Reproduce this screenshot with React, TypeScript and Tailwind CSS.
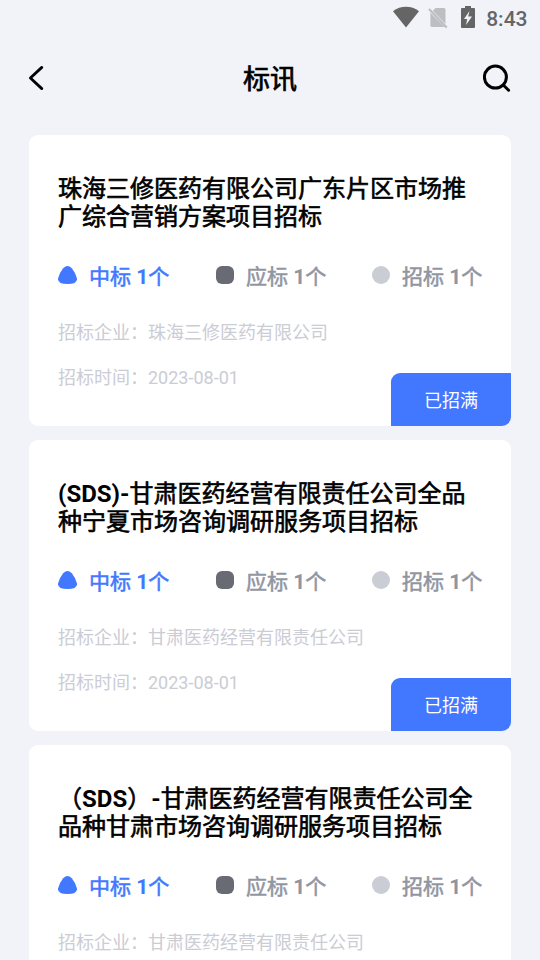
import { Fragment } from "react";

const font = "font-['Roboto','Noto_Sans_CJK_SC',sans-serif]";

type Bid = { title: string[]; company: string; date: string };

const bids: Bid[] = [
  { title: ["珠海三修医药有限公司广东片区市场推", "广综合营销方案项目招标"], company: "珠海三修医药有限公司", date: "2023-08-01" },
  { title: ["(SDS)-甘肃医药经营有限责任公司全品", "种宁夏市场咨询调研服务项目招标"], company: "甘肃医药经营有限责任公司", date: "2023-08-01" },
  { title: ["（SDS）-甘肃医药经营有限责任公司全", "品种甘肃市场咨询调研服务项目招标"], company: "甘肃医药经营有限责任公司", date: "2023-08-01" },
];

// Latin runs use the bold face; Chinese runs use the regular face thickened by a stroke.
function Strong({ text }: { text: string }) {
  return (
    <>
      {text.split(/([ -~]+)/).map((part, i) => (
        <Fragment key={i}>
          {i % 2 ? <span className="font-bold">{part}</span> : <span className="font-normal [-webkit-text-stroke:0.026em_currentColor]">{part}</span>}
        </Fragment>
      ))}
    </>
  );
}

function StatusBar() {
  return (
    <div className="flex h-9 shrink-0 items-center justify-end pr-[12.5px] text-[#656565]">
      <svg className="-mt-0.5" width="26" height="22" viewBox="0 0 26 22" fill="currentColor"><path d="M0 5.2C7.5-.7 18.5-.7 26 5.2L13 21.5Z" /></svg>
      <svg className="ml-[9px]" width="20" height="22" viewBox="0 0 20 22" fill="#bdbec1"><path d="M7.5 1H16Q17.5 1 17.5 2.5V17L4.8 3.8Z" /><path d="M2.4 5.8L16.6 20H4Q2.4 20 2.4 18.4Z" /><path d="M.2 2.8L1.8 1.3L19.5 19.8L18 21.4Z" /></svg>
      <svg className="-mt-0.5 ml-[13px] mr-[11px]" width="14" height="22" viewBox="0 0 14 22"><path d="M4 0H10V2H13Q14 2 14 3V21Q14 22 13 22H1Q0 22 0 21V3Q0 2 1 2H4Z" fill="currentColor" /><path d="M8.5 5L3 13H6.2L5 19L11 10.5H7.2Z" fill="#f2f3f8" /></svg>
      <span className="pt-0.5 text-[21px] font-medium leading-none">8:43</span>
    </div>
  );
}

function Card({ bid }: { bid: Bid }) {
  return (
    <article className="flex h-[291px] shrink-0 flex-col overflow-hidden rounded-[9px] bg-white pl-[29px] pt-10">
      <h2 className="text-2xl leading-7 whitespace-nowrap text-black">
        {bid.title.map((line) => <span className="block" key={line}><Strong text={line} /></span>)}
      </h2>
      <div className="mt-[31px] flex h-8 items-center text-[21px] whitespace-nowrap text-[#9195a1]">
        <div className="flex w-[158px] items-center text-[#4278ff]">
          <svg className="-mt-1.5 mr-3 w-[19px]" height="18" viewBox="0 0 19 18"><path d="M5.2 2.2Q9.5-2.2 13.8 2.2Q17.5 6.5 19 12.5Q19.3 18 9.5 18Q-.3 18 0 12.5Q1.5 6.5 5.2 2.2Z" fill="currentColor" /></svg><span><Strong text="中标 1个" /></span>
        </div>
        <div className="flex w-[156px] items-center"><i className="-mt-1.5 mr-3 size-[18px] rounded-md bg-[#686b73]" /><span><Strong text="应标 1个" /></span></div>
        <div className="flex items-center"><i className="-mt-1.5 mr-3 size-[18px] rounded-full bg-[#cbcdd4]" /><span><Strong text="招标 1个" /></span></div>
      </div>
      <div className="mt-[25px] h-[45px] text-lg leading-7 text-[#cbccd4]">招标企业：{bid.company}</div>
      <div className="flex flex-1 justify-between text-lg text-[#cbccd4]">
        <span className="leading-7">招标时间：{bid.date}</span>
        <span className="flex h-[53px] w-[120px] items-center justify-center self-end rounded-tl-[9px] bg-[#4278ff] pt-0.5 text-white">已招满</span>
      </div>
    </article>
  );
}

export default function App() {
  return (
    <main className={`flex h-[960px] w-[540px] flex-col overflow-hidden bg-[#f2f3f8] ${font}`}>
      <StatusBar />
      <header className="flex h-[99px] shrink-0 items-start justify-between px-[27px] pt-6 text-black">
        <svg className="mt-[5px]" width="30" height="26" viewBox="0 0 30 26" fill="none" stroke="currentColor" strokeWidth="2.8" strokeLinecap="round" strokeLinejoin="round"><path d="M14.8 2.4L3.4 13L14.8 23.6" /></svg>
        <h1 className="text-[27px] leading-10"><Strong text="标讯" /></h1>
        <svg className="mt-[3px]" width="30" height="30" viewBox="0 0 30 30" fill="none" stroke="currentColor" strokeWidth="3" strokeLinecap="round"><circle cx="12.4" cy="14.1" r="11" /><path d="M20.5 22.2L25.6 27.2" /></svg>
      </header>
      <section className="flex flex-col gap-3.5 px-[29px]">{bids.map((bid) => <Card bid={bid} key={bid.title[0]} />)}</section>
    </main>
  );
}
